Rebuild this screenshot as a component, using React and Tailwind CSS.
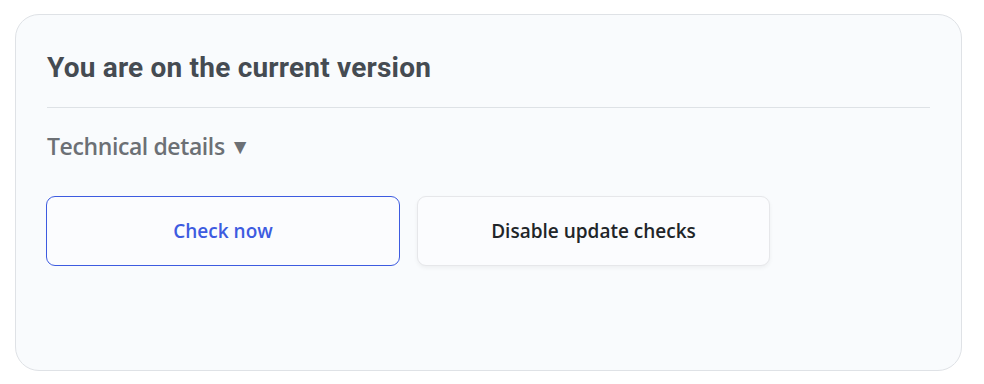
import React from "react";

const UpdateCard = () => {
  return (
    <div className="bg-white w-[984px] h-[384px] pt-[14px] pl-[15px]">
      <div
        className="w-[947px] h-[357px] rounded-[24px] border border-[#dfe2e6] bg-[#f9fbfd] px-[31px] pt-[35px]"
        style={{ fontFamily: '"Open Sans", "Noto Sans", sans-serif' }}
      >
        <h1
          className="text-[28px] leading-[36px] font-bold text-[#454b52] tracking-[0.2px]"
          style={{ fontFamily: 'Roboto, "Liberation Sans", sans-serif' }}
        >
          You are on the current version
        </h1>
        <div className="mt-[21px] h-px bg-[#dee2e6]" />
        <button
          type="button"
          className="mt-[23px] flex items-center gap-[5px] text-[23px] leading-[30px] font-semibold text-[#6c7075] tracking-[-0.4px]"
        >
          Technical details
          <span className="text-[21px] leading-none">▼</span>
        </button>
        <div className="mt-[35px] -ml-px flex gap-[17px]">
          <button
            type="button"
            className="w-[354px] h-[70px] rounded-[9px] border border-[#3d5be0] bg-[#fbfcfe] text-[19px] font-semibold text-[#3d5be0]"
          >
            Check now
          </button>
          <button
            type="button"
            className="w-[353px] h-[70px] rounded-[9px] border border-[#e6e7ea] bg-[#fbfcfe] text-[19px] font-semibold text-[#212529] shadow-[0_2px_4px_rgba(0,0,0,0.05)]"
          >
            Disable update checks
          </button>
        </div>
      </div>
    </div>
  );
};

export default function App() {
  return <UpdateCard />;
}
